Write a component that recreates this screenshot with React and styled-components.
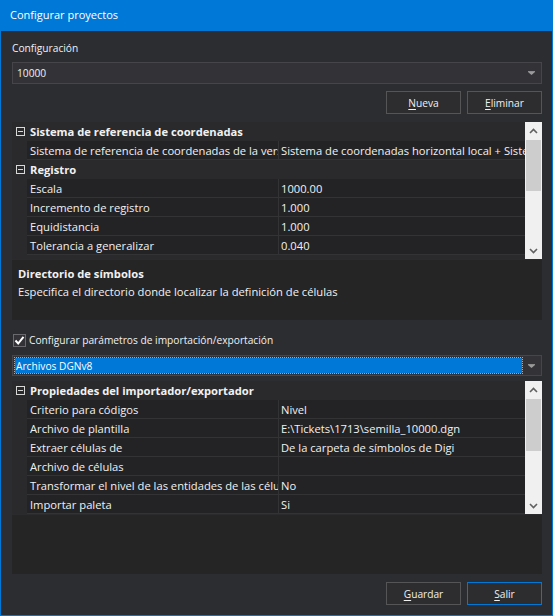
import React from 'react';
import styled, { createGlobalStyle } from 'styled-components';

const GlobalStyle = createGlobalStyle`
    html, body {
        margin: 0;
        padding: 0;
        background: #2b2d31;
    }

    body {
        font-family: "Open Sans", "Noto Sans", sans-serif;
        font-size: 10.2px;
        color: #f1f1f1;
    }
`;

const registro = [
    { name: 'Escala', value: '1000.00' },
    { name: 'Incremento de registro', value: '1.000' },
    { name: 'Equidistancia', value: '1.000' },
    { name: 'Tolerancia a generalizar', value: '0.040' },
];

const importador = [
    { name: 'Criterio para códigos', value: 'Nivel' },
    { name: 'Archivo de plantilla', value: 'E:\\Tickets\\1713\\semilla_10000.dgn' },
    { name: 'Extraer células de', value: 'De la carpeta de símbolos de Digi' },
    { name: 'Archivo de células', value: '' },
    { name: 'Transformar el nivel de las entidades de las células', value: 'No' },
    { name: 'Importar paleta', value: 'Si' },
];

function MinusBox() {
    return (
        <svg width="9" height="9" viewBox="0 0 9 9">
            <rect x="0.5" y="0.5" width="8" height="8" fill="none" stroke="#d8d8d8" />
            <line x1="2" y1="4.5" x2="7" y2="4.5" stroke="#d8d8d8" />
        </svg>
    );
}

function Chevron({ down }) {
    return (
        <svg width="9" height="6" viewBox="0 0 9 6">
            <polyline
                points={down ? '1,1 4.5,4.5 8,1' : '1,5 4.5,1.5 8,5'}
                fill="none"
                stroke="#606060"
                strokeWidth="1.6"
            />
        </svg>
    );
}

function DropArrow() {
    return (
        <svg width="7" height="4" viewBox="0 0 7 4">
            <rect x="0" y="0" width="7" height="1" fill="#8c8c8c" />
            <polygon points="0,1 7,1 3.5,4" fill="#9a9a9a" />
        </svg>
    );
}

function Category({ title }) {
    return (
        <CategoryRow>
            <Margin><MinusBox /></Margin>
            <CategoryTitle>{title}</CategoryTitle>
        </CategoryRow>
    );
}

function Property({ name, value }) {
    return (
        <PropRow>
            <Margin />
            <NameCell>{name}</NameCell>
            <ValueCell>{value}</ValueCell>
        </PropRow>
    );
}

function PropertyGrid({ viewport, help, thumb, children, title, text }) {
    return (
        <GridFrame>
            <Viewport $height={viewport}>
                <Rows>{children}</Rows>
                <Scrollbar>
                    <ScrollButton><Chevron /></ScrollButton>
                    <Track>
                        <Thumb $height={thumb} />
                    </Track>
                    <ScrollButton><Chevron down /></ScrollButton>
                </Scrollbar>
            </Viewport>
            <HelpPane $height={help}>
                {title && <HelpTitle>{title}</HelpTitle>}
                {text && <HelpText>{text}</HelpText>}
            </HelpPane>
        </GridFrame>
    );
}

export default function App() {
    return (
        <Window>
            <GlobalStyle />
            <TitleBar>Configurar proyectos</TitleBar>

            <Body>
                <FieldLabel>Configuración</FieldLabel>
                <Combo $top={6} $height={22}>
                    <ComboText>10000</ComboText>
                    <ComboArrow><DropArrow /></ComboArrow>
                </Combo>

                <ButtonRow $top={7}>
                    <Button><u>N</u>ueva</Button>
                    <Button><u>E</u>liminar</Button>
                </ButtonRow>

                <Spacer $h={8} />
                <PropertyGrid
                    viewport={137}
                    help={60}
                    thumb={51}
                    title="Directorio de símbolos"
                    text="Especifica el directorio donde localizar la definición de células"
                >
                    <Category title="Sistema de referencia de coordenadas" />
                    <Property
                        name="Sistema de referencia de coordenadas de la versión"
                        value="Sistema de coordenadas horizontal local + Sistema vertical"
                    />
                    <Category title="Registro" />
                    {registro.map((row, index) => (
                        <Property key={index} name={row.name} value={row.value} />
                    ))}
                </PropertyGrid>

                <CheckRow>
                    <CheckBox>
                        <svg width="11" height="11" viewBox="0 0 11 11">
                            <polyline points="1.5,5.5 4.2,8.5 9.5,1.8" fill="none" stroke="#ffffff" strokeWidth="2" />
                        </svg>
                    </CheckBox>
                    <span>Configurar parámetros de importación/exportación</span>
                </CheckRow>

                <Combo $top={7} $height={21}>
                    <Selection>Archivos DGNv8</Selection>
                    <ComboArrow><DropArrow /></ComboArrow>
                </Combo>

                <Spacer $h={5} />
                <PropertyGrid viewport={133} help={59} thumb={52}>
                    <Category title="Propiedades del importador/exportador" />
                    {importador.map((row, index) => (
                        <Property key={index} name={row.name} value={row.value} />
                    ))}
                </PropertyGrid>

                <ButtonRow $top={8}>
                    <Button><u>G</u>uardar</Button>
                    <Button $default><u>S</u>alir</Button>
                </ButtonRow>
            </Body>
        </Window>
    );
}

const Window = styled.div`
    width: 553px;
    height: 616px;
    box-sizing: border-box;
    border: 1px solid #0078d7;
    border-top: none;
    background: #2b2d31;
    display: flex;
    flex-direction: column;
`;

const TitleBar = styled.div`
    height: 31px;
    flex-shrink: 0;
    background: #0078d7;
    color: #ffffff;
    font-size: 11px;
    padding-left: 9px;
    display: flex;
    align-items: center;
    padding-bottom: 2px;
    box-sizing: border-box;
`;

const Body = styled.div`
    padding: 0 10px 0 11px;
    display: flex;
    flex-direction: column;
`;

const Spacer = styled.div`
    height: ${props => props.$h}px;
    flex-shrink: 0;
`;

const FieldLabel = styled.div`
    margin-top: 9px;
    line-height: 16px;
`;

const Combo = styled.div`
    margin-top: ${props => props.$top}px;
    height: ${props => props.$height}px;
    box-sizing: border-box;
    background: #333337;
    border: 1px solid #46464a;
    display: flex;
    align-items: center;
    padding: 2px 0 2px 2px;
`;

const ComboText = styled.div`
    flex: 1;
    padding-left: 2px;
`;

const Selection = styled.div`
    flex: 1;
    align-self: stretch;
    background: #0078d7;
    color: #ffffff;
    outline: 1px dotted #f39a3c;
    outline-offset: 0;
    padding-left: 1px;
    display: flex;
    align-items: center;
`;

const ComboArrow = styled.div`
    width: 19px;
    display: flex;
    justify-content: center;
    align-items: center;
`;

const ButtonRow = styled.div`
    margin-top: ${props => props.$top}px;
    display: flex;
    justify-content: flex-end;
    gap: 6px;
`;

const Button = styled.div`
    width: 75px;
    height: 23px;
    box-sizing: border-box;
    background: #2d2d30;
    border: 1px solid ${props => (props.$default ? '#0078d7' : '#555558')};
    color: #f1f1f1;
    display: flex;
    justify-content: center;
    align-items: center;

    u {
        text-underline-offset: 2px;
    }
`;

const GridFrame = styled.div`
    display: flex;
    flex-direction: column;
    gap: 1px;
    background: #2b2b2e;
    font-size: 11.2px;
`;

const Viewport = styled.div`
    height: ${props => props.$height}px;
    display: flex;
    overflow: hidden;
    background: #2a2a2d;
`;

const Rows = styled.div`
    flex: 1;
    min-width: 0;
    overflow: hidden;
`;

const CategoryRow = styled.div`
    height: 19px;
    display: flex;
    align-items: center;
    font-weight: bold;
`;

const Margin = styled.div`
    width: 15px;
    flex-shrink: 0;
    align-self: stretch;
    display: flex;
    justify-content: center;
    align-items: center;
    padding-left: 2px;
    box-sizing: border-box;
`;

const CategoryTitle = styled.div`
    padding-left: 3px;
    white-space: nowrap;
`;

const PropRow = styled.div`
    height: 19px;
    display: flex;
    box-sizing: border-box;
`;

const NameCell = styled.div`
    width: 252px;
    flex-shrink: 0;
    background: #232325;
    border-bottom: 1px solid #333336;
    border-right: 1px solid #333336;
    padding-left: 3px;
    padding-top: 1px;
    box-sizing: border-box;
    white-space: nowrap;
    overflow: hidden;
    line-height: 17px;
`;

const ValueCell = styled(NameCell)`
    flex: 1;
    width: auto;
    border-right: none;
    padding-left: 2px;
`;

const Scrollbar = styled.div`
    width: 17px;
    flex-shrink: 0;
    background: #f0f0f0;
    display: flex;
    flex-direction: column;
`;

const ScrollButton = styled.div`
    height: 17px;
    display: flex;
    justify-content: center;
    align-items: center;
`;

const Track = styled.div`
    flex: 1;
    padding: 1px 1px 0;
`;

const Thumb = styled.div`
    height: ${props => props.$height}px;
    background: #cdcdcd;
`;

const HelpPane = styled.div`
    height: ${props => props.$height}px;
    box-sizing: border-box;
    background: #252526;
    padding: 6px 6px 0;
`;

const HelpTitle = styled.div`
    font-weight: bold;
    line-height: 16px;
`;

const HelpText = styled.div`
    margin-top: 2px;
    line-height: 16px;
`;

const CheckRow = styled.div`
    margin-top: 12px;
    height: 16px;
    display: flex;
    align-items: center;
    gap: 3px;
`;

const CheckBox = styled.div`
    width: 13px;
    height: 13px;
    box-sizing: border-box;
    background: #333337;
    border: 1px solid #6a6a6e;
    display: flex;
    justify-content: center;
    align-items: center;
    margin-left: 1px;
`;
